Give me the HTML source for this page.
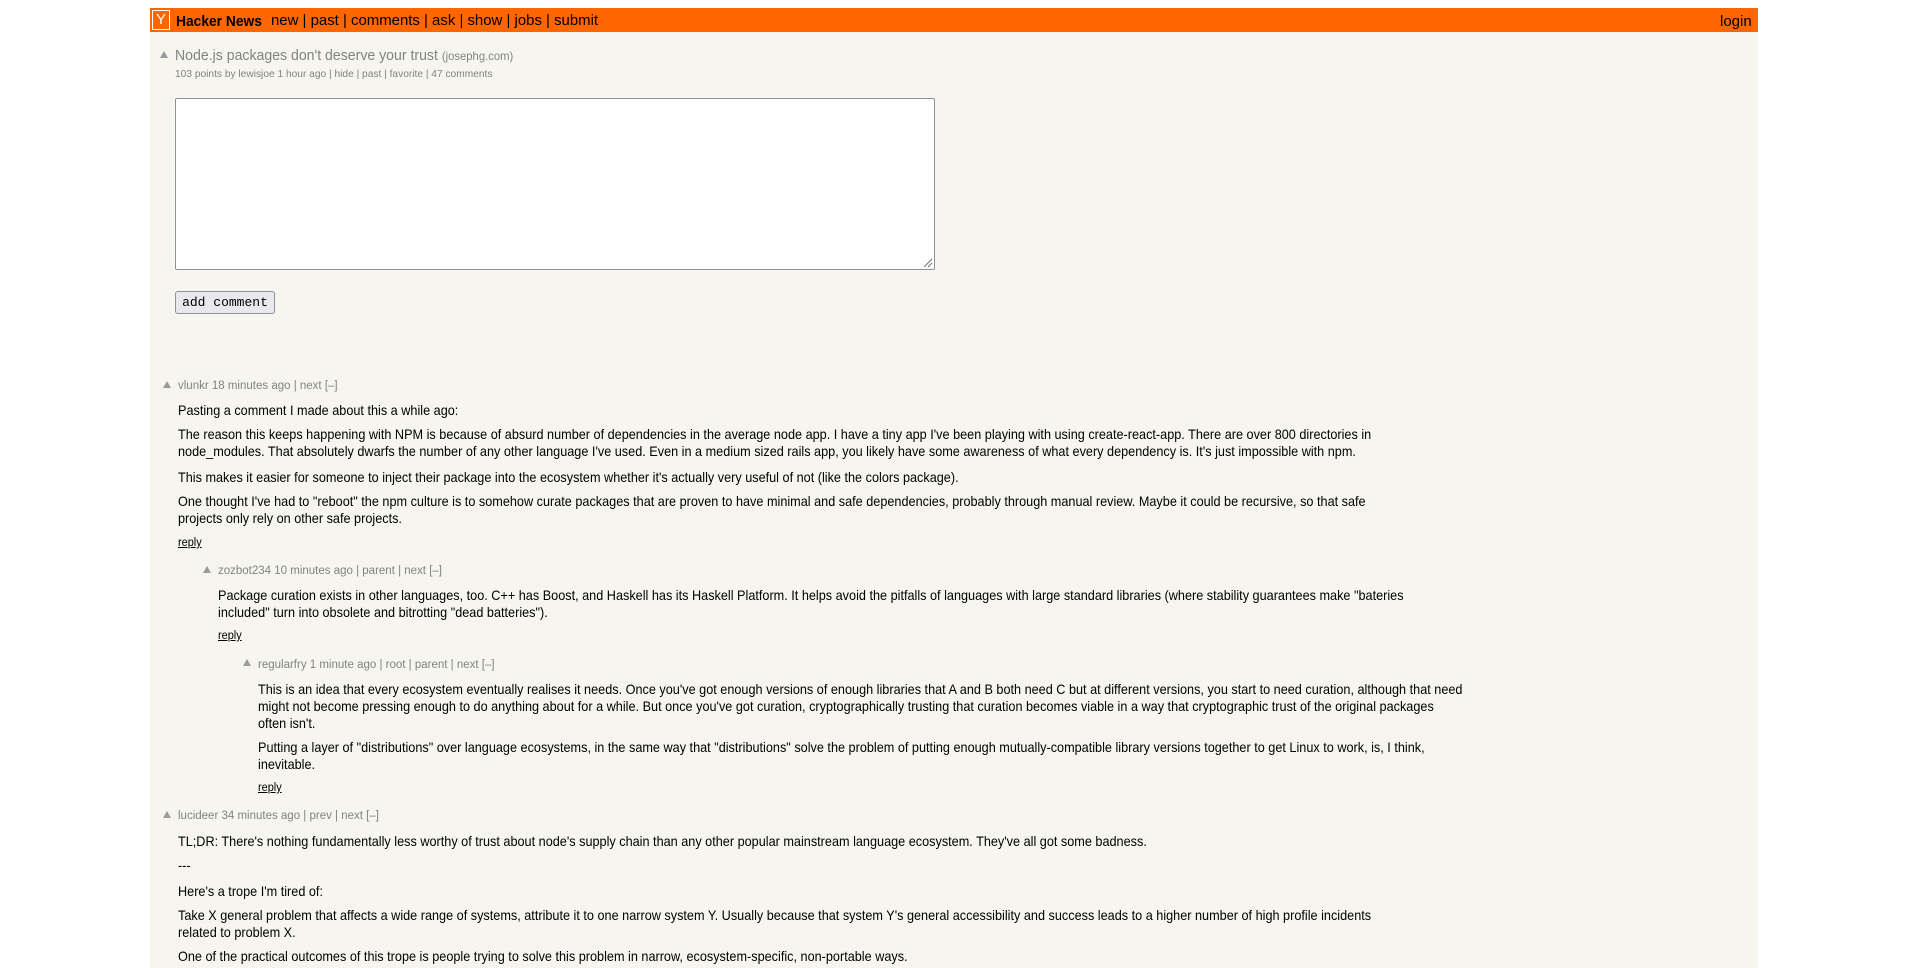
<!DOCTYPE html>
<html><head><meta charset="utf-8"><style>
html,body{margin:0;padding:0;background:#fff;width:1908px;height:962px;overflow:hidden;font-family:"Liberation Sans",sans-serif}
#bg{position:absolute;left:150px;top:8px;width:1608px;height:960px;background:#f6f6ef}
#hdr{position:absolute;left:150px;top:8px;width:1608px;height:24px;background:#ff6600}
.a{position:absolute;white-space:nowrap;transform-origin:0 50%;line-height:17px}
.t{color:#000;font-size:14px;transform:scaleX(.905)}
.h{color:#828282;font-size:11.5px}
.r{color:#000;font-size:11.5px;text-decoration:underline;transform:scaleX(.95)}
.tri{position:absolute;width:0;height:0;border-left:4px solid transparent;border-right:4px solid transparent;border-bottom:7px solid #9a9a9a}
</style></head><body>
<div id="bg"></div>
<div id="hdr"></div>
<div style="position:absolute;left:152px;top:10px;width:18px;height:20px;border:1px solid #fff;box-sizing:border-box;color:#fff;font-size:15px;line-height:18px;text-align:center">Y</div>
<div class="a" style="left:176px;top:13px;font-size:15px;font-weight:bold;transform:scaleX(.92)">Hacker News</div>
<div class="a" style="left:271px;top:13px;font-size:14.5px;transform:scaleX(1.03)">new | past | comments | ask | show | jobs | submit</div>
<div class="a" style="left:1720px;top:13px;font-size:15px">login</div>

<div class="tri" style="left:160px;top:51px"></div>
<div class="a" style="left:175px;top:47px;font-size:15px;color:#828282;transform:scaleX(.94)">Node.js packages don't deserve your trust <span style="font-size:12px">(josephg.com)</span></div>
<div class="a" style="left:175px;top:66px;font-size:10.5px;color:#828282;transform:scaleX(.97)">103 points by lewisjoe 1 hour ago | hide | past | favorite | 47 comments</div>

<div style="position:absolute;left:175px;top:98px;width:760px;height:172px;box-sizing:border-box;background:#fff;border:1px solid #8f8f9d;border-radius:2px"></div>
<svg style="position:absolute;left:923px;top:258px" width="10" height="10"><path d="M9 1L1 9M9 5L5 9" stroke="#777" stroke-width="1"/></svg>
<div style="position:absolute;left:175px;top:291px;width:100px;height:23px;box-sizing:border-box;background:#e9e9ed;border:1px solid #8f8f9d;border-radius:3px;font-family:'Liberation Mono',monospace;font-size:13px;line-height:21px;text-align:center;color:#000">add comment</div>

<!-- c1 -->
<div class="tri" style="left:163px;top:381px"></div>
<div class="a h" style="left:178px;top:378px">vlunkr 18 minutes ago | next [–]</div>
<div class="a t" style="left:178px;top:402px">Pasting a comment I made about this a while ago:</div>
<div class="a t" style="left:178px;top:426px">The reason this keeps happening with NPM is because of absurd number of dependencies in the average node app. I have a tiny app I've been playing with using create-react-app. There are over 800 directories in</div>
<div class="a t" style="left:178px;top:443px">node_modules. That absolutely dwarfs the number of any other language I've used. Even in a medium sized rails app, you likely have some awareness of what every dependency is. It's just impossible with npm.</div>
<div class="a t" style="left:178px;top:469px">This makes it easier for someone to inject their package into the ecosystem whether it's actually very useful of not (like the colors package).</div>
<div class="a t" style="left:178px;top:493px">One thought I've had to "reboot" the npm culture is to somehow curate packages that are proven to have minimal and safe dependencies, probably through manual review. Maybe it could be recursive, so that safe</div>
<div class="a t" style="left:178px;top:510px">projects only rely on other safe projects.</div>
<div class="a r" style="left:178px;top:535px">reply</div>

<!-- c2 -->
<div class="tri" style="left:203px;top:566px"></div>
<div class="a h" style="left:218px;top:563px">zozbot234 10 minutes ago | parent | next [–]</div>
<div class="a t" style="left:218px;top:587px">Package curation exists in other languages, too. C++ has Boost, and Haskell has its Haskell Platform. It helps avoid the pitfalls of languages with large standard libraries (where stability guarantees make "bateries</div>
<div class="a t" style="left:218px;top:604px">included" turn into obsolete and bitrotting "dead batteries").</div>
<div class="a r" style="left:218px;top:628px">reply</div>

<!-- c3 -->
<div class="tri" style="left:243px;top:659px"></div>
<div class="a h" style="left:258px;top:657px">regularfry 1 minute ago | root | parent | next [–]</div>
<div class="a t" style="left:258px;top:681px">This is an idea that every ecosystem eventually realises it needs. Once you've got enough versions of enough libraries that A and B both need C but at different versions, you start to need curation, although that need</div>
<div class="a t" style="left:258px;top:698px">might not become pressing enough to do anything about for a while. But once you've got curation, cryptographically trusting that curation becomes viable in a way that cryptographic trust of the original packages</div>
<div class="a t" style="left:258px;top:715px">often isn't.</div>
<div class="a t" style="left:258px;top:739px">Putting a layer of "distributions" over language ecosystems, in the same way that "distributions" solve the problem of putting enough mutually-compatible library versions together to get Linux to work, is, I think,</div>
<div class="a t" style="left:258px;top:756px">inevitable.</div>
<div class="a r" style="left:258px;top:780px">reply</div>

<!-- c4 -->
<div class="tri" style="left:163px;top:811px"></div>
<div class="a h" style="left:178px;top:808px">lucideer 34 minutes ago | prev | next [–]</div>
<div class="a t" style="left:178px;top:833px">TL;DR: There's nothing fundamentally less worthy of trust about node's supply chain than any other popular mainstream language ecosystem. They've all got some badness.</div>
<div class="a t" style="left:178px;top:857px">---</div>
<div class="a t" style="left:178px;top:883px">Here's a trope I'm tired of:</div>
<div class="a t" style="left:178px;top:907px">Take X general problem that affects a wide range of systems, attribute it to one narrow system Y. Usually because that system Y's general accessibility and success leads to a higher number of high profile incidents</div>
<div class="a t" style="left:178px;top:924px">related to problem X.</div>
<div class="a t" style="left:178px;top:948px">One of the practical outcomes of this trope is people trying to solve this problem in narrow, ecosystem-specific, non-portable ways.</div>
</body></html>
